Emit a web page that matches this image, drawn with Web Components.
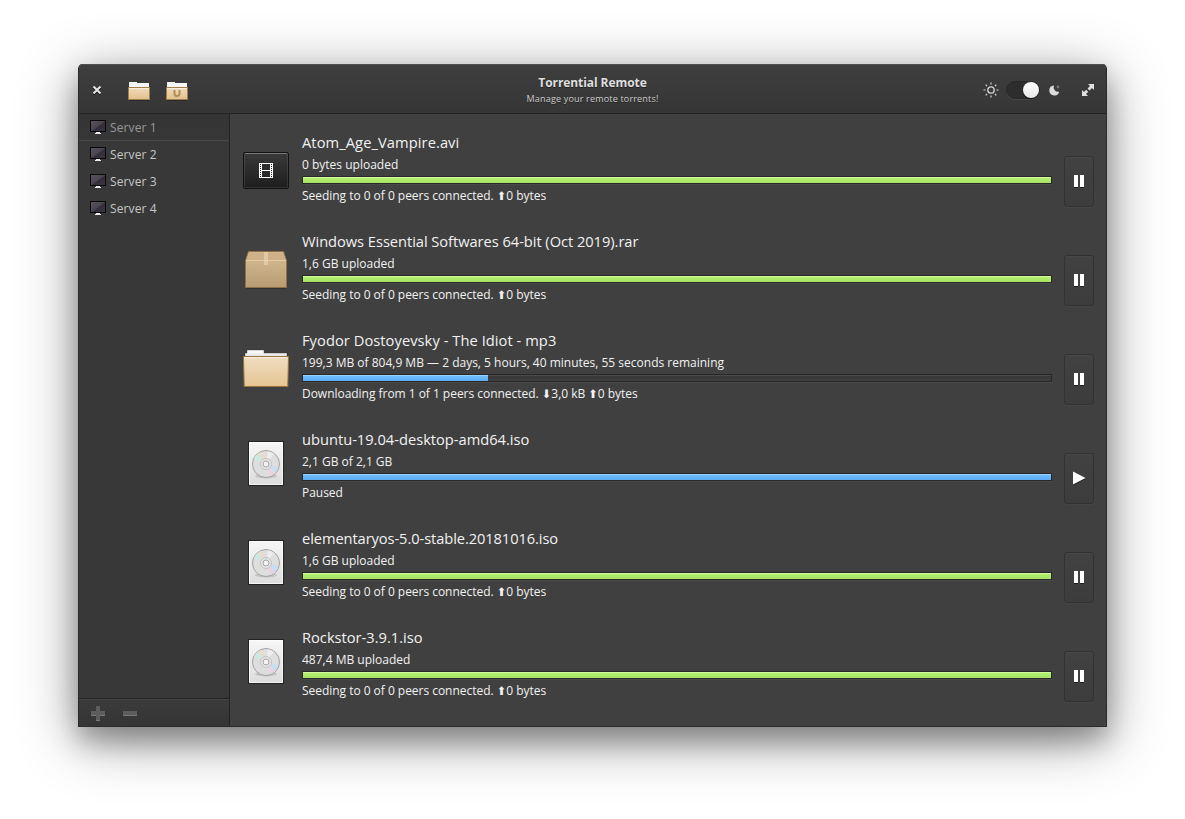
<!DOCTYPE html>
<html lang="en"><head><meta charset="utf-8"><title>Torrential Remote</title>
<style>html,body{margin:0;height:100%;background:#fff;overflow:hidden}body{display:flow-root;font-family:"Open Sans",sans-serif}</style></head>
<body>
<app-window></app-window>
<script>
const define=(name,html,setup)=>customElements.define(name,class extends HTMLElement{
  connectedCallback(){
    if(this.shadowRoot)return;
    const root=this.attachShadow({mode:'open'});
    root.innerHTML=typeof html==='function'?html(this):html;
    if(setup)setup(this,root);
  }
});

const folder=(w,h,mark='')=>`<svg width="${w}" height="${h}" viewBox="0 0 46 39"><defs><linearGradient id="f" x2="0" y2="1"><stop stop-color="#f0dec2"/><stop offset="1" stop-color="#e6c593"/></linearGradient><linearGradient id="p" x2="0" y2="1"><stop stop-color="#fff"/><stop offset="1" stop-color="#ddd"/></linearGradient></defs>
<path d="M2 9V4h2V1h17v3h23v5z" fill="url(#p)" stroke="#222" stroke-opacity=".35"/><path d="M.5 7.5h45l-.7 30H1.200z" fill="url(#f)" stroke="#9a7440"/><path d="M1.500 8.500h43" stroke="#fff" stroke-opacity=".5"/>${mark}</svg>`;
const smallFolder=mark=>`<svg width="24" height="20" viewBox="0 0 24 20"><defs><linearGradient id="f" x2="0" y2="1"><stop stop-color="#efdcbf"/><stop offset="1" stop-color="#e3c08b"/></linearGradient></defs>
<path d="M2 6V1h8v1h12v4z" fill="#f6f6f6"/><path d="M1.500 6.500h21v12h-21z" fill="url(#f)" stroke="#a37e4b"/><path d="M2 7.500h20" stroke="#fff" stroke-opacity=".5"/>${mark?'<path d="M9.500 9v3.500a2.500 2.500 0 0 0 5 0V9" fill="none" stroke="#b38d57" stroke-width="2"/>':''}<path d="M2 19.500h20" stroke="#000" stroke-opacity=".25"/></svg>`;
const pictures={
  folder:folder(46,39),
  video:`<svg width="46" height="38" viewBox="0 0 46 38"><defs><linearGradient id="v" x2="0" y2="1"><stop stop-color="#3a3a3a"/><stop offset="1" stop-color="#1d1d1d"/></linearGradient></defs><rect x=".5" y=".5" width="45" height="36" rx="1.500" fill="url(#v)" stroke="#121212"/><path d="M2 1.500h42" stroke="#777"/><path d="M1.500 2v34M44.500 2v34M2 35.500h42" stroke="#fff" stroke-opacity=".09"/>
<path fill="#fff" fill-rule="evenodd" d="M16 11h14v15H16zM19 12v6h8v-6zM19 19v6h8v-6z"/><path d="M17.500 12v14M28.500 12v14" stroke="#222" stroke-dasharray="1 1"/></svg>`,
  box:`<svg width="46" height="40" viewBox="0 0 46 40"><defs><linearGradient id="b" x2="0" y2="1"><stop stop-color="#d9be95"/><stop offset="1" stop-color="#b79b72"/></linearGradient></defs><path d="M3 38.500h40" stroke="#222" stroke-opacity=".5"/><path d="M5.500 1.500h35l3 9v27h-41v-27z" fill="url(#b)" stroke="#8e6f48"/><path d="M6 2.500h34l2.500 7.500h-39z" fill="#cfb189"/><path d="M3 10.500h40" stroke="#e3cba7"/><path d="M21 2h4v13h-4z" fill="#f0dfc2" opacity=".5"/></svg>`,
  disc:`<svg width="46" height="46" viewBox="0 0 46 46"><defs><linearGradient id="d" x2="0" y2="1"><stop stop-color="#f6f6f6"/><stop offset="1" stop-color="#dcdcdc"/></linearGradient><filter id="s" x="-20%" y="-20%" width="140%" height="140%"><feGaussianBlur stdDeviation=".6"/></filter></defs><rect x="5.500" y="1.500" width="35" height="44" fill="url(#d)" stroke="#222"/><path d="M6.500 2.500h33v42h-33z" fill="none" stroke="#fff" stroke-opacity=".7"/>
<ellipse cx="23" cy="36" rx="11" ry="2.500" opacity=".12" filter="url(#s)"/><circle cx="23" cy="24" r="13.500" fill="#dedede" stroke="#a2a2a2"/><g filter="url(#s)"><path d="M23 24L11 18.500A13 13 0 0 1 14.500 14z" fill="#c8eae2"/><path d="M23 24L14.500 14A13 13 0 0 1 18.500 11.800z" fill="#eadcc8"/><path d="M23 24L35.500 27A13 13 0 0 1 32 33z" fill="#c8def0"/><path d="M23 24L32 33A13 13 0 0 1 28 36z" fill="#ead3e0"/><path d="M23 24L25 11.200A13 13 0 0 1 31 13.800z" fill="#ededed"/></g><circle cx="23" cy="24" r="5.500" fill="#e4e4e4" stroke="#c4c4c4"/><circle cx="23" cy="24" r="3" fill="#f2f2f2" stroke="#a8a8a8"/></svg>`
};

define('header-bar',`<style>
:host{box-sizing:border-box;height:50px;display:grid;grid-template-columns:1fr auto 1fr;align-items:center;background:linear-gradient(#3e3e3e,#363636);border-bottom:1px solid #222;box-shadow:inset 0 1px #515151;border-radius:4px 4px 0 0;color:#dedede}
.l,.r{display:flex;align-items:center}.l{padding:3px 0 0 12px}.r{justify-content:flex-end;padding:3px 11px 0 0}
.l svg:first-child{margin-right:24px}.l svg+svg{position:relative;top:1px}.l svg+svg+svg{margin-left:14px}
.t{text-align:center;text-shadow:0 1px #222}.t b{display:block;font-size:12px;line-height:17px;margin-top:3px;letter-spacing:-.08px}.t small{display:block;font-size:9px;line-height:15px;letter-spacing:.18px;color:#cecece}
.sw{box-sizing:border-box;width:34px;height:18px;border-radius:9px;background:#2d2d2d;border:1px solid #282828;display:flex;justify-content:flex-end;box-shadow:0 1px #484848;margin:0 9px 0 7px}
.sw i{width:16px;height:16px;border-radius:50%;background:linear-gradient(#fff,#e8e8e8);box-shadow:0 1px 1px #111}
.full{margin-left:20px}
</style><div class="l"><svg width="12" height="12"><path d="M2.500 3.500l7 7M9.500 3.500l-7 7" stroke="#111" stroke-width="2"/><path d="M2.500 2.500l7 7M9.500 2.500l-7 7" stroke="#e2e2e2" stroke-width="2.100"/></svg>${smallFolder(0)}${smallFolder(1)}</div>
<div class="t"><b>Torrential Remote</b><small>Manage your remote torrents!</small></div>
<div class="r"><svg width="16" height="16" fill="none" stroke="#d8d8d8"><circle cx="8" cy="8" r="3.200" stroke-width="1.300"/><path d="M8 .5v2M8 13.500v2M.5 8h2M13.500 8h2M2.700 2.700l1.400 1.400M11.900 11.900l1.400 1.400M2.700 13.300l1.400-1.400M11.900 4.100l1.400-1.400" stroke-width="1.200"/></svg><span class="sw"><i></i></span>
<svg width="12" height="12"><path d="M5 1.500A5 5 0 1 0 10.200 7.500A4.400 4.400 0 0 1 5 1.500z" fill="#dcdcdc"/><circle cx="9" cy="3" r="1.400" fill="#777"/></svg>
<svg class="full" width="14" height="14"><path d="M7 1h6v6l-2-2-2.500 2.500-2-2L9 3zM1 7l2 2 2.200-2.200 2 2L5 11l2 2H1z" fill="#e0e0e0"/></svg></div>`);

define('server-item',el=>`<style>
:host{box-sizing:border-box;height:27px;display:flex;align-items:center;padding-left:11px;gap:4px;font-size:12px;letter-spacing:.12px;color:#c6c6c6;border-bottom:1px solid transparent}
:host([selected]){color:#989898;background:linear-gradient(#343434,#373737);border-bottom-color:#494949}
</style><svg width="16" height="16"><defs><linearGradient id="m" x2="1" y2="1"><stop stop-color="#5b5560"/><stop offset=".5" stop-color="#4a4450"/><stop offset=".55" stop-color="#332d3a"/><stop offset="1" stop-color="#3c3543"/></linearGradient></defs><rect x=".5" y="1.500" width="15" height="11" fill="url(#m)" stroke="#080808"/><path d="M6 13h4v1h1v1H5v-1h1z" fill="#eee"/></svg><span><slot></slot></span>`);

define('side-bar',`<style>
:host{display:flex;flex-direction:column;box-sizing:border-box;width:151px;background:#383838;border-right:1px solid #222}
.list{flex:1}.bar{box-sizing:border-box;height:28px;border-top:1px solid #222;box-shadow:inset 0 1px #464646;background:linear-gradient(#3b3b3b,#353535);display:flex;align-items:center;padding:0 0 0 11px;gap:16px}
</style><div class="list"><server-item selected>Server 1</server-item><server-item>Server 2</server-item><server-item>Server 3</server-item><server-item>Server 4</server-item></div>
<div class="bar"><svg width="16" height="16"><path d="M6 1h4v5h5v4h-5v5H6v-5H1V6h5z" fill="#5d5d5d"/><path d="M1 10.500h5M10 10.500h5M6 15.500h4" stroke="#777"/></svg><svg width="16" height="16"><path d="M1 6h14v4H1z" fill="#5d5d5d"/><path d="M1 10.500h14" stroke="#777"/></svg></div>`);

define('progress-line',el=>`<style>
:host{display:block;box-sizing:border-box;height:8px;border:1px solid #282828;background:linear-gradient(#4a4a4a 0 1px,#373737 1px,#3e3e3e);box-shadow:0 1px #494949}
i{display:block;box-sizing:border-box;height:6px;width:${el.getAttribute('value')}%;background:${el.hasAttribute('done')?'linear-gradient(#d0fa9c 0 1px,#b4f06e 1px,#a7e265)':'linear-gradient(#98d1ff 0 1px,#6fbcff 1px,#5cabf3)'}}
</style><i></i>`);

define('action-button',el=>`<style>
:host{box-sizing:border-box;width:30px;height:51px;border:1px solid #323232;border-radius:3px;background:linear-gradient(#424242,#3c3c3c);box-shadow:inset 0 1px #484848,0 1px #454545;display:flex;align-items:center;justify-content:center;padding-bottom:1px}
svg{filter:drop-shadow(0 1px 0 #1c1c1c)}
</style><svg width="16" height="16" fill="#fff">${el.getAttribute('kind')==='play'?'<path d="M2 1.500v13L14.500 8z"/>':'<path d="M3 2h4v12H3zM9 2h4v12H9z"/>'}</svg>`);

define('torrent-row',el=>{const a=n=>el.getAttribute(n)||'';return `<style>
:host{box-sizing:border-box;height:99px;display:grid;grid-template-columns:46px 1fr 30px;column-gap:13px;align-items:center;padding:0 12px 0 13px;color:#f2f2f2;font-size:12px}
.icon{display:flex;height:46px;align-items:center;justify-content:center}
:host([icon=disc]) .icon{padding-bottom:10px}
.info{align-self:start;padding-top:10px;margin-right:-1px;white-space:nowrap}
.name{font-size:14.670px;line-height:22px;letter-spacing:${a('track')||0}px}.sub{line-height:19px;padding:2px 0 2px}.st{line-height:19px;height:19px;padding-top:2px;letter-spacing:-.03px}
action-button{margin-top:22px}
</style><div class="icon">${pictures[a('icon')]}</div>
<div class="info"><div class="name">${a('name')}</div><div class="sub">${a('sub')}</div><progress-line value="${a('value')||100}" ${a('kind')==='done'?'done':''}></progress-line><div class="st"><slot></slot></div></div>
<action-button kind="${a('button')}"></action-button>`});

define('torrent-list',`<style>:host{display:block;flex:1;padding-top:7px;background:#404040}.a{font:11.500px/0 "DejaVu Sans"}</style>
<torrent-row icon="video" kind="done" track=".09" name="Atom_Age_Vampire.avi" sub="0 bytes uploaded">Seeding to 0 of 0 peers connected. <span class="a">⬆</span>0 bytes</torrent-row>
<torrent-row icon="box" kind="done" track="-.04" name="Windows Essential Softwares 64-bit (Oct 2019).rar" sub="1,6 GB uploaded">Seeding to 0 of 0 peers connected. <span class="a">⬆</span>0 bytes</torrent-row>
<torrent-row icon="folder" value="24.76" track=".06" name="Fyodor Dostoyevsky - The Idiot - mp3" sub="199,3 MB of 804,9 MB — 2 days, 5 hours, 40 minutes, 55 seconds remaining">Downloading from 1 of 1 peers connected. <span class="a">⬇</span>3,0 kB <span class="a">⬆</span>0 bytes</torrent-row>
<torrent-row icon="disc" button="play" name="ubuntu-19.04-desktop-amd64.iso" sub="2,1 GB of 2,1 GB">Paused</torrent-row>
<torrent-row icon="disc" kind="done" track="-.08" name="elementaryos-5.0-stable.20181016.iso" sub="1,6 GB uploaded">Seeding to 0 of 0 peers connected. <span class="a">⬆</span>0 bytes</torrent-row>
<torrent-row icon="disc" kind="done" name="Rockstor-3.9.1.iso" sub="487,4 MB uploaded">Seeding to 0 of 0 peers connected. <span class="a">⬆</span>0 bytes</torrent-row>`);

define('app-window',`<style>
:host{box-sizing:border-box;display:flex;flex-direction:column;width:1029px;height:663px;margin:64px 0 0 78px;border:1px solid #2b2b2b;border-top:0;border-radius:5px 5px 0 0;background:#404040;box-shadow:0 14px 26px rgba(0,0,0,.27),0 12px 58px rgba(0,0,0,.42)}
main{flex:1;display:flex;min-height:0}
</style><header-bar></header-bar><main><side-bar></side-bar><torrent-list></torrent-list></main>`);
</script>
</body></html>
